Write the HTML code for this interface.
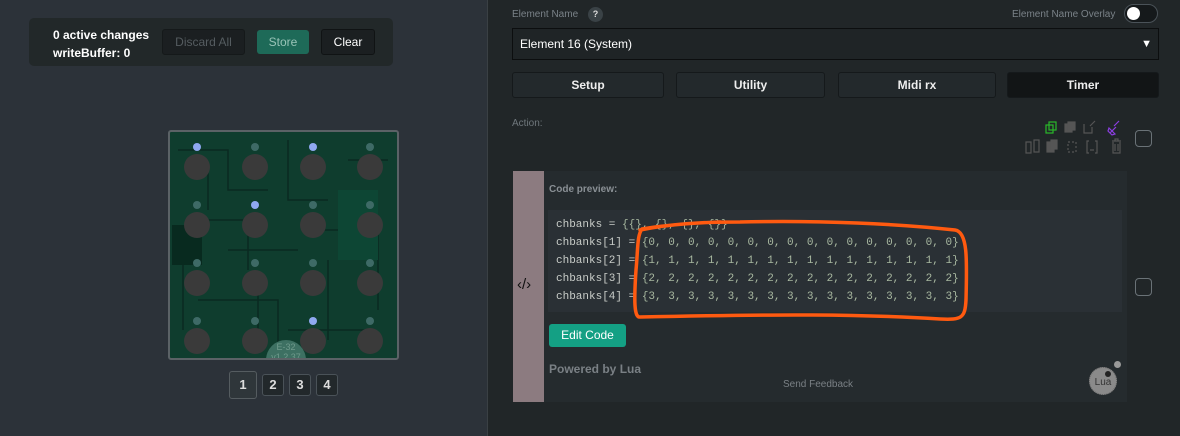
<!DOCTYPE html><html><head><style>
body{margin:0;width:1180px;height:436px;overflow:hidden;background:#2c3239;font-family:"Liberation Sans",sans-serif;position:relative}
.a{position:absolute}
.btn{position:absolute;border-radius:3px;font-size:12px;text-align:center;box-sizing:border-box}
.tab{position:absolute;top:72px;height:26px;background:#23292c;border:1px solid #15191b;border-radius:3px;color:#eee;font-size:12px;font-weight:bold;text-align:center;line-height:24px;box-sizing:border-box}
.code{font-family:"Liberation Mono",monospace;font-size:11px;color:#a8b8a0;line-height:18px;white-space:pre}
.pg{position:absolute;top:374px;width:20px;height:20px;border:1px solid #4a5258;border-radius:3px;color:#ddd;font-weight:bold;font-size:13px;text-align:center;line-height:20px;background:#22282b}
</style></head><body>
<div class="a" style="left:29px;top:18px;width:364px;height:48px;background:#222829;border-radius:5px"></div>
<div class="a" style="left:53px;top:26px;color:#fff;font-size:12px;font-weight:bold;line-height:18px">0 active changes<br>writeBuffer: 0</div>
<div class="btn" style="left:162px;top:29px;width:83px;height:26px;background:#1b1f21;border:1px solid #15191a;color:#555c60;line-height:24px">Discard All</div>
<div class="btn" style="left:257px;top:30px;width:52px;height:24px;background:#1e6a58;color:#9ac4b8;line-height:24px">Store</div>
<div class="btn" style="left:321px;top:29px;width:54px;height:26px;background:#1b1f21;border:1px solid #101314;color:#fff;line-height:24px">Clear</div>

<div class="a" style="left:168px;top:130px;width:231px;height:230px;box-sizing:border-box;border:2px solid #5b6266;border-radius:3px;background:#0f3d2e;overflow:hidden">
<svg width="231" height="230" style="position:absolute;left:-2px;top:-2px">
<g stroke="#0a2a20" stroke-width="1.5" fill="none">
<path d="M10 20 H60 V60 H100 M20 90 H80 V140 M120 10 V70 H160 M180 30 H220 M140 100 H210 V180 M30 170 H110 V220 M120 200 H200 M60 120 H130 M200 60 V120 M40 40 V80 M90 150 V200 M160 130 V210 M15 130 V200"/>
</g>
<rect x="170" y="60" width="40" height="70" fill="#0d4634"/>
<rect x="4" y="95" width="30" height="40" fill="#082a1f"/>
<g fill="#3a3a3a">
<circle cx="29" cy="37" r="13"/><circle cx="87" cy="37" r="13"/><circle cx="145" cy="37" r="13"/><circle cx="202" cy="37" r="13"/>
<circle cx="29" cy="95" r="13"/><circle cx="87" cy="95" r="13"/><circle cx="145" cy="95" r="13"/><circle cx="202" cy="95" r="13"/>
<circle cx="29" cy="153" r="13"/><circle cx="87" cy="153" r="13"/><circle cx="145" cy="153" r="13"/><circle cx="202" cy="153" r="13"/>
<circle cx="29" cy="211" r="13"/><circle cx="87" cy="211" r="13"/><circle cx="145" cy="211" r="13"/><circle cx="202" cy="211" r="13"/>
</g>
<g fill="#3e6a66">
<circle cx="87" cy="17" r="4"/><circle cx="202" cy="17" r="4"/><circle cx="29" cy="75" r="4"/><circle cx="145" cy="75" r="4"/><circle cx="202" cy="75" r="4"/>
<circle cx="29" cy="133" r="4"/><circle cx="87" cy="133" r="4"/><circle cx="145" cy="133" r="4"/><circle cx="202" cy="133" r="4"/>
<circle cx="29" cy="191" r="4"/><circle cx="87" cy="191" r="4"/><circle cx="202" cy="191" r="4"/></g>
<g fill="#8fa8f0"><circle cx="29" cy="17" r="4"/><circle cx="145" cy="17" r="4"/><circle cx="87" cy="75" r="4"/><circle cx="145" cy="191" r="4"/></g>
<path d="M98 230 A20 20 0 0 1 138 230" fill="#3d7062"/>
<text x="118" y="220" fill="#6f9a8c" font-size="9" text-anchor="middle" font-family="Liberation Sans">E-32</text>
<text x="118" y="230" fill="#6f9a8c" font-size="9" text-anchor="middle" font-family="Liberation Sans">v1.2.37</text>
</svg></div>
<div class="pg" style="left:229px;top:371px;width:26px;height:26px;line-height:26px;background:#2f363a;border-color:#555c60">1</div>
<div class="pg" style="left:262px">2</div><div class="pg" style="left:289px">3</div><div class="pg" style="left:316px">4</div>

<div class="a" style="left:487px;top:0;width:693px;height:436px;background:#212628;border-left:1px solid #3a4044"></div>
<div class="a" style="left:512px;top:9px;color:#7a8288;font-size:10px">Element Name</div>
<div class="a" style="left:588px;top:7px;width:15px;height:15px;border-radius:50%;background:#3a4246;color:#ddd;font-size:9px;font-weight:bold;text-align:center;line-height:15px">?</div>
<div class="a" style="left:1012px;top:9px;color:#7a8288;font-size:10px">Element Name Overlay</div>
<div class="a" style="left:1124px;top:4px;width:34px;height:19px;border-radius:10px;background:#15191b;border:1px solid #4a5258;box-sizing:border-box"><div class="a" style="left:2px;top:2px;width:13px;height:13px;border-radius:50%;background:#fff"></div></div>
<div class="a" style="left:512px;top:28px;width:647px;height:32px;box-sizing:border-box;border:1px solid #0c0e0f;background:#1f2426;color:#fff;font-size:12px;line-height:30px;padding-left:7px">Element 16 (System)<span style="position:absolute;right:6px;font-size:11px">▼</span></div>
<div class="tab" style="left:512px;width:152px">Setup</div>
<div class="tab" style="left:676px;width:149px">Utility</div>
<div class="tab" style="left:838px;width:158px">Midi rx</div>
<div class="tab" style="left:1007px;width:152px;background:#121516">Timer</div>
<div class="a" style="left:512px;top:118px;color:#6f777c;font-size:10px">Action:</div>
<svg class="a" style="left:1020px;top:119px" width="110" height="40" fill="none" stroke-width="1.2">
<g stroke="#2ab82a"><rect x="26" y="6" width="7" height="8"/><rect x="29" y="3" width="7" height="8"/></g>
<g fill="#555" stroke="#555"><rect x="45" y="5" width="7" height="8"/><rect x="48" y="3" width="7" height="8"/></g>
<g stroke="#555"><path d="M64 5 V14 H72 V8 M70 7 L75 2"/><path d="M14 21 H19 V33 H14 Z M6 23 H11 V34 H6 Z" /><rect x="27" y="23" width="7" height="10" fill="#555"/><rect x="31" y="21" width="6" height="9" fill="#555"/><rect x="48" y="23" width="8" height="10" stroke-dasharray="2 2"/><path d="M69 22 H67 V34 H69 M75 22 H77 V34 H75 M70 31 H74"/><path d="M92 22 H101 M95 22 V20 H98 V22 M93 23 V34 H100 V23 M95 25 V32 M98 25 V32"/></g>
<path stroke="#8b3ee0" d="M90 14 L96 8 M94 7 L99 2 M89 9 L95 15 L92 16 L88 12 Z"/>
</svg>
<div class="a" style="left:1135px;top:130px;width:17px;height:17px;border:1px solid #6a7277;border-radius:4px;box-sizing:border-box"></div>
<div class="a" style="left:1135px;top:278px;width:17px;height:18px;border:1px solid #6a7277;border-radius:4px;box-sizing:border-box"></div>

<div class="a" style="left:513px;top:171px;width:614px;height:231px;background:#252b2e"></div>
<div class="a" style="left:513px;top:171px;width:31px;height:231px;background:#8c7b80"></div>
<div class="a" style="left:517px;top:276px;color:#111;font-size:15px">‹/›</div>
<div class="a" style="left:549px;top:184px;color:#8a9095;font-size:10px;font-weight:bold">Code preview:</div>
<div class="a" style="left:548px;top:210px;width:574px;height:102px;background:#2a3035"></div>
<div class="a code" style="left:556px;top:216px"><span style="color:#c8ccc8">chbanks = </span>{{}, {}, {}, {}}
<span style="color:#c8ccc8">chbanks[1] = </span>{0, 0, 0, 0, 0, 0, 0, 0, 0, 0, 0, 0, 0, 0, 0, 0}
<span style="color:#c8ccc8">chbanks[2] = </span>{1, 1, 1, 1, 1, 1, 1, 1, 1, 1, 1, 1, 1, 1, 1, 1}
<span style="color:#c8ccc8">chbanks[3] = </span>{2, 2, 2, 2, 2, 2, 2, 2, 2, 2, 2, 2, 2, 2, 2, 2}
<span style="color:#c8ccc8">chbanks[4] = </span>{3, 3, 3, 3, 3, 3, 3, 3, 3, 3, 3, 3, 3, 3, 3, 3}</div>
<svg class="a" style="left:0;top:0" width="1180" height="436"><path d="M640 230 C670 224 700 222 740 222 C820 220 900 224 955 230 C968 232 967 260 966 300 C965 318 962 320 940 319 C860 314 780 314 640 317 C634 318 634 300 636 270 C638 250 637 235 642 229 C660 226 690 223 720 222" fill="none" stroke="#ff5a10" stroke-width="3.5" stroke-linecap="round"/></svg>
<div class="btn" style="left:549px;top:324px;width:77px;height:23px;background:#14a084;color:#fff;line-height:23px">Edit Code</div>
<div class="a" style="left:549px;top:362px;color:#7a8085;font-size:12px;font-weight:bold">Powered by Lua</div>
<div class="a" style="left:783px;top:379px;color:#7a8085;font-size:10px">Send Feedback</div>
<div class="a" style="left:1089px;top:367px;width:26px;height:26px;border-radius:50%;background:#8a8a8a;color:#333;font-size:10px;text-align:center;line-height:30px;border:1px dotted #666">Lua</div>
<div class="a" style="left:1114px;top:361px;width:7px;height:7px;border-radius:50%;background:#999"></div>
<div class="a" style="left:1105px;top:371px;width:6px;height:6px;border-radius:50%;background:#222"></div>
</body></html>
